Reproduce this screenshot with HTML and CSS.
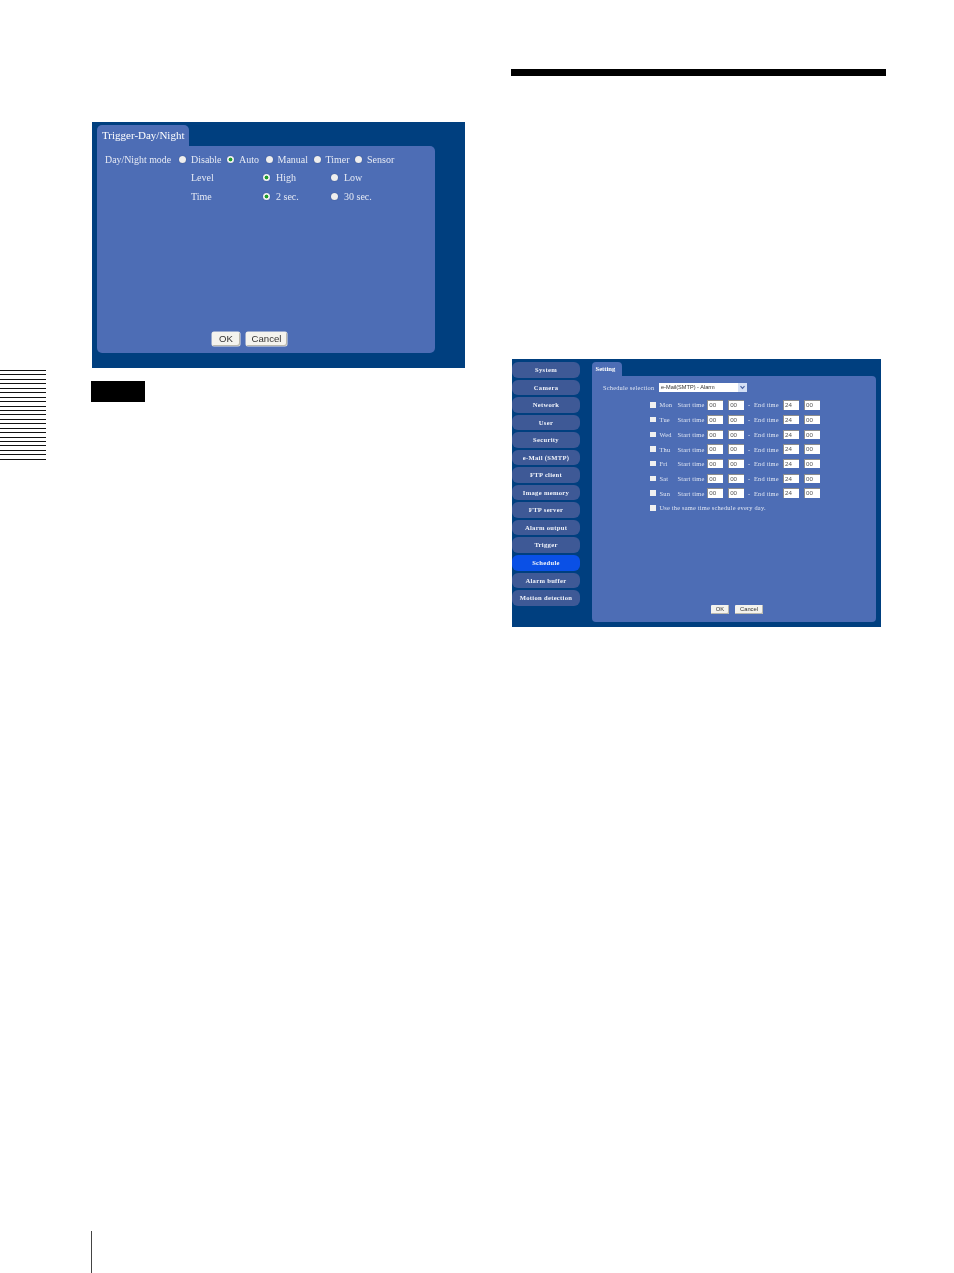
FILE: index.html
```html
<!DOCTYPE html>
<html lang="en">
<head>
<meta charset="utf-8">
<title>Trigger and Schedule settings</title>
<link rel="stylesheet" href="styles.css">
</head>
<body>
<div class="page">
  <div class="spread">
    <div class="thumb"><i></i><i></i><i></i><i></i><i></i><i></i><i></i><i></i><i></i><i></i><i></i><i></i><i></i><i></i><i></i><i></i><i></i><i></i><i></i><i></i><i></i></div>
    <section class="col col-left">
      <div class="win-a">
        <div class="tab-a">Trigger-Day/Night</div>
        <div class="panel-a">
          <div class="row-a r1">
            <span class="lbl-a">Day/Night mode</span>
            <span class="opt w48"><i class="radio"></i>Disable</span>
            <span class="opt w38"><i class="radio on"></i>Auto</span>
            <span class="opt w48"><i class="radio"></i>Manual</span>
            <span class="opt w42"><i class="radio"></i>Timer</span>
            <span class="opt"><i class="radio"></i>Sensor</span>
          </div>
          <div class="row-a r2">
            <span class="sub-a">Level</span>
            <span class="opt w68"><i class="radio on"></i>High</span>
            <span class="opt wide-gap"><i class="radio"></i>Low</span>
          </div>
          <div class="row-a r3">
            <span class="sub-a">Time</span>
            <span class="opt w68"><i class="radio on"></i>2 sec.</span>
            <span class="opt wide-gap"><i class="radio"></i>30 sec.</span>
          </div>
          <div class="btns-a">
            <span class="btn btn-ok">OK</span>
            <span class="btn btn-cancel">Cancel</span>
          </div>
        </div>
      </div>
      <div class="note"></div>
    </section>
    <section class="col col-right">
      <div class="rule"></div>
      <div class="win-b">
        <nav class="nav">
          <a class="nav-item">System</a>
          <a class="nav-item">Camera</a>
          <a class="nav-item">Network</a>
          <a class="nav-item">User</a>
          <a class="nav-item">Security</a>
          <a class="nav-item">e-Mail (SMTP)</a>
          <a class="nav-item">FTP client</a>
          <a class="nav-item">Image memory</a>
          <a class="nav-item">FTP server</a>
          <a class="nav-item">Alarm output</a>
          <a class="nav-item">Trigger</a>
          <a class="nav-item active">Schedule</a>
          <a class="nav-item">Alarm buffer</a>
          <a class="nav-item">Motion detection</a>
        </nav>
        <div class="content-b">
          <div class="tab-b">Setting</div>
          <div class="panel-b">
            <div class="sel-row">
              <span class="sel-lbl">Schedule selection</span>
              <span class="select">e-Mail(SMTP) - Alarm
                <span class="sel-arrow"><svg width="9" height="9" viewBox="0 0 9 9"><path d="M2.5 3.2 4.5 5.4 6.5 3.2" fill="none" stroke="#4a62a0" stroke-width="1.2"/></svg></span>
              </span>
            </div>
            <div class="day"><i class="check"></i><span class="d">Mon</span><span class="st">Start time</span><span class="inp">00</span><span class="inp in2">00</span><span class="dash">-</span><span class="et">End time</span><span class="inp">24</span><span class="inp in2">00</span></div>
            <div class="day"><i class="check"></i><span class="d">Tue</span><span class="st">Start time</span><span class="inp">00</span><span class="inp in2">00</span><span class="dash">-</span><span class="et">End time</span><span class="inp">24</span><span class="inp in2">00</span></div>
            <div class="day"><i class="check"></i><span class="d">Wed</span><span class="st">Start time</span><span class="inp">00</span><span class="inp in2">00</span><span class="dash">-</span><span class="et">End time</span><span class="inp">24</span><span class="inp in2">00</span></div>
            <div class="day"><i class="check"></i><span class="d">Thu</span><span class="st">Start time</span><span class="inp">00</span><span class="inp in2">00</span><span class="dash">-</span><span class="et">End time</span><span class="inp">24</span><span class="inp in2">00</span></div>
            <div class="day"><i class="check"></i><span class="d">Fri</span><span class="st">Start time</span><span class="inp">00</span><span class="inp in2">00</span><span class="dash">-</span><span class="et">End time</span><span class="inp">24</span><span class="inp in2">00</span></div>
            <div class="day"><i class="check"></i><span class="d">Sat</span><span class="st">Start time</span><span class="inp">00</span><span class="inp in2">00</span><span class="dash">-</span><span class="et">End time</span><span class="inp">24</span><span class="inp in2">00</span></div>
            <div class="day"><i class="check"></i><span class="d">Sun</span><span class="st">Start time</span><span class="inp">00</span><span class="inp in2">00</span><span class="dash">-</span><span class="et">End time</span><span class="inp">24</span><span class="inp in2">00</span></div>
            <div class="day"><i class="check"></i><span>Use the same time schedule every day.</span></div>
            <div class="btns-b">
              <span class="btn-s btn-s-ok">OK</span>
              <span class="btn-s btn-s-cancel">Cancel</span>
            </div>
          </div>
        </div>
      </div>
    </section>
  </div>
  <div class="foot-line"></div>
</div>
</body>
</html>
```
FILE: styles.css
```css
* { box-sizing: border-box; }
html, body { margin: 0; padding: 0; background: #fff; }
body { font-family: "Liberation Serif", serif; overflow: hidden; }
.page { width: 954px; height: 1273px; display: flex; flex-direction: column; }
.spread { flex: 1; display: flex; align-items: flex-start; }

.thumb {
  width: 46px; height: 90px; margin-top: 370px; flex: none;
  display: flex; flex-direction: column; justify-content: space-between;
}
.thumb i { display: block; height: 1px; background: #111; }
.col { width: 375px; flex: none; }
.col-left { margin-left: 45px; padding-top: 122px; }
.col-right { margin-left: 45px; padding-top: 69px; }
.foot-line { width: 1px; height: 42px; margin-left: 91px; background: #444; flex: none; }

/* Day/Night window */
.win-a {
  width: 373px; height: 246px; margin-left: 1px; padding: 3px 0 15px 5px;
  background: #003f7f; display: flex; flex-direction: column;
  color: #e6eaf4; font-size: 10px; filter: blur(.45px);
}
.tab-a {
  width: 92px; height: 21px; background: #4d6db5; border-radius: 5px 5px 0 0;
  font-size: 11px; line-height: 20px; padding-left: 5px; color: #fff; white-space: nowrap; flex: none;
}
.panel-a {
  width: 338px; flex: 1; background: #4d6db5; border-radius: 0 5px 5px 5px;
  display: flex; flex-direction: column; padding: 4.5px 0 7px 8px;
}
.row-a { display: flex; align-items: center; height: 18px; white-space: nowrap; }
.r2 { padding-left: 86px; }
.r3 { margin-top: 1px; padding-left: 86px; }
.lbl-a { width: 74px; flex: none; font-size: 9.9px; }
.sub-a { width: 72px; flex: none; }
.opt { display: inline-flex; align-items: center; flex: none; }
.radio {
  width: 7px; height: 7px; border-radius: 50%; background: #eee; margin-right: 5px; flex: none;
  box-shadow: 0 0 1px #2a3f70;
}
.radio.on { background: radial-gradient(circle, #1f9e2a 0 1.6px, #eee 2.2px); }
.r2 .radio, .r3 .radio { margin-right: 6px; }
.w48 { width: 48px; }
.w38 { width: 38.5px; }
.w42 { width: 41.5px; }
.w68 { width: 68px; }
.btns-a { margin-top: auto; display: flex; gap: 6px; padding-left: 107px; }
.btn {
  height: 14px; background: #f4f3ee; color: #333; border-radius: 2px;
  font: 9.6px/13px "Liberation Sans", sans-serif; text-align: center;
  box-shadow: inset -1px -1px 0 #b9b8ae, 0 0 0 .5px #e8e8e8;
}
.btn-ok { width: 28px; }
.btn-cancel { width: 41px; }

.note { width: 54px; height: 21px; margin-top: 13px; background: #000; }

/* Rule */
.rule { height: 7px; background: #000; }

/* Schedule window */
.win-b {
  width: 369px; height: 268px; margin: 283px 0 0 1px; padding: 3px 5px 5px 0;
  background: #003f7f; display: flex; color: #dfe5f2; font-size: 6.4px; filter: blur(.4px);
}
.nav { width: 68px; flex: none; display: flex; flex-direction: column; gap: 2px; margin-right: 12px; }
.nav-item {
  height: 15.55px; border-radius: 6px; background: #3e5996; color: #f0f3fa; font-size: 6.6px;
  font-weight: 700; text-align: center; line-height: 15px; letter-spacing: .3px; white-space: nowrap;
}
.nav-item.active { background: #0a50e6; }
.content-b { flex: 1; display: flex; flex-direction: column; }
.tab-b {
  width: 30px; height: 14px; background: #4d6db5; border-radius: 4px 4px 0 0; font-size: 6.6px;
  font-weight: 700; line-height: 14px; padding-left: 3.5px; color: #fff; flex: none;
}
.panel-b { flex: 1; background: #4d6db5; border-radius: 0 4px 4px 4px; padding: 6px 0 8px 58px; display: flex; flex-direction: column; }
.sel-row { display: flex; align-items: center; height: 11px; margin-left: -47px; margin-bottom: 4.65px; letter-spacing: .2px; }
.sel-lbl { width: 56px; flex: none; white-space: nowrap; }
.select {
  position: relative; width: 88px; height: 9.5px; background: #fff; color: #333;
  font: 5.6px/9px "Liberation Sans", sans-serif; letter-spacing: 0; padding-left: 2px; white-space: nowrap;
}
.sel-arrow { position: absolute; right: 0; top: 0; width: 9px; height: 9.5px; background: #d4e0f6; display: block; }
.sel-arrow svg { display: block; }
.day { display: flex; align-items: center; height: 14.7px; letter-spacing: .2px; white-space: nowrap; }
.check { width: 5.5px; height: 5.5px; background: #f0f0f0; margin-right: 4px; flex: none; }
.d { width: 18px; flex: none; }
.st { width: 29.7px; flex: none; }
.et { width: 29px; flex: none; }
.dash { width: 6px; margin-left: 3.5px; flex: none; }
.inp {
  width: 16.3px; height: 9.5px; background: #fff; color: #555; flex: none;
  font: 6.2px/8.5px "Liberation Sans", sans-serif; padding-left: 1px;
  border-top: 1px solid #8d8d8d; border-left: 1px solid #8d8d8d; letter-spacing: 0;
}
.inp.in2 { margin-left: 4.7px; }
.btns-b { margin-top: auto; display: flex; gap: 6px; padding-left: 61px; }
.btn-s {
  height: 9.5px; background: #f4f3ee; color: #333; border-radius: 1px;
  font: 5.8px/9px "Liberation Sans", sans-serif; text-align: center; letter-spacing: 0;
  box-shadow: inset -1px -1px 0 #b9b8ae;
}
.btn-s-ok { width: 18px; }
.btn-s-cancel { width: 28px; }
```
